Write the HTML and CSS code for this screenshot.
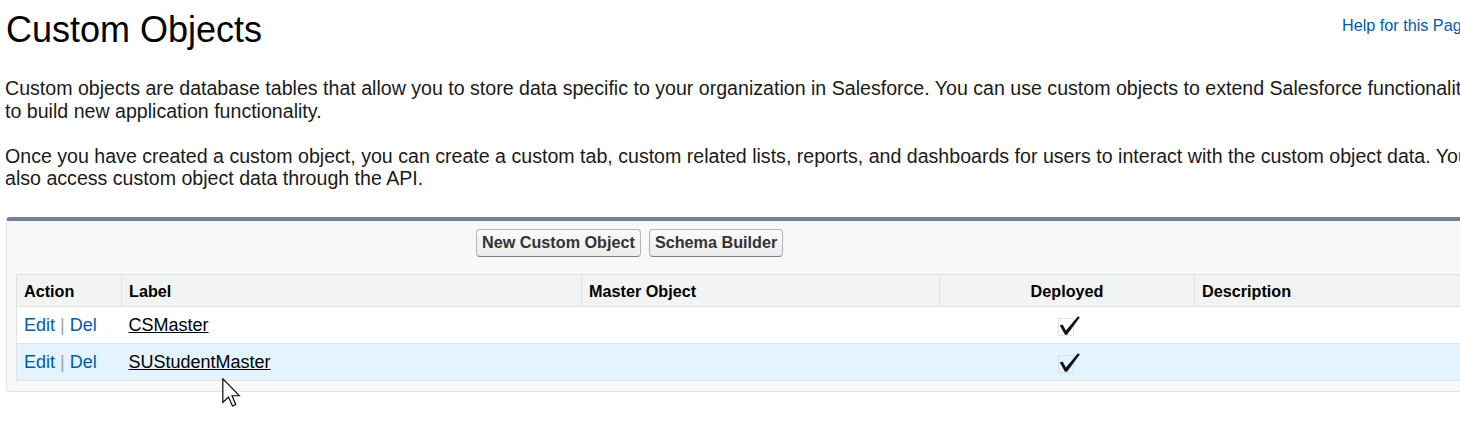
FILE: index.html
```html
<!DOCTYPE html>
<html>
<head>
<meta charset="utf-8">
<title>Custom Objects</title>
<link rel="stylesheet" href="styles.css">
</head>
<body>
<div class="page">
  <div class="page-header">
    <h1 class="page-title">Custom Objects</h1>
    <a class="help-link" href="#">Help for this Page</a>
  </div>
  <p class="intro">Custom objects are database tables that allow you to store data specific to your organization in Salesforce. You can use custom objects to extend Salesforce functionality or<br>to build new application functionality.<br><br>Once you have created a custom object, you can create a custom tab, custom related lists, reports, and dashboards for users to interact with the custom object data. You can<br>also access custom object data through the API.</p>

  <div class="block">
    <div class="block-buttons">
      <button class="btn">New Custom Object</button>
      <button class="btn">Schema Builder</button>
    </div>
    <table class="list">
      <colgroup>
        <col class="c-action"><col class="c-label"><col class="c-master"><col class="c-deployed"><col class="c-desc">
      </colgroup>
      <thead>
        <tr>
          <th>Action</th>
          <th>Label</th>
          <th>Master Object</th>
          <th class="center">Deployed</th>
          <th>Description</th>
        </tr>
      </thead>
      <tbody>
        <tr>
          <td><a class="action" href="#">Edit</a> <span class="sep">|</span> <a class="action" href="#">Del</a></td>
          <td><a class="obj" href="#">CSMaster</a></td>
          <td></td>
          <td class="center"><svg class="check" width="32" height="24" viewBox="0 0 32 24"><rect x="8.5" y="5.5" width="15" height="17" fill="none" stroke="#c8c8c8" stroke-dasharray="1 1"/><path d="M9.8 12.6 L12.6 11.4 L15.9 17.6 L28 3.2 L29.8 4.4 L17 21.8 L15 21.8 Z" fill="#111"/></svg></td>
          <td></td>
        </tr>
        <tr class="hover">
          <td><a class="action" href="#">Edit</a> <span class="sep">|</span> <a class="action" href="#">Del</a></td>
          <td><a class="obj" href="#">SUStudentMaster</a></td>
          <td></td>
          <td class="center"><svg class="check" width="32" height="24" viewBox="0 0 32 24"><rect x="8.5" y="5.5" width="15" height="17" fill="none" stroke="#c8c8c8" stroke-dasharray="1 1"/><path d="M9.8 12.6 L12.6 11.4 L15.9 17.6 L28 3.2 L29.8 4.4 L17 21.8 L15 21.8 Z" fill="#111"/></svg></td>
          <td></td>
        </tr>
      </tbody>
    </table>
  </div>
</div>
<svg class="cursor" width="20" height="29" viewBox="0 0 13 19"><path d="M0.5 0.5 L0.5 16 L4.2 12.5 L6.8 18.3 L9 17.3 L6.5 11.6 L11.3 11.6 Z" fill="#fff" stroke="#000" stroke-width="0.75" stroke-linejoin="miter"/></svg>
</body>
</html>
```
FILE: styles.css
```css
html, body {
  margin: 0;
  padding: 0;
  background: #fff;
}
body {
  width: 1460px;
  height: 436px;
  overflow: hidden;
  position: relative;
  font-family: "Liberation Sans", Arial, sans-serif;
  color: #1a1a1a;
}
.page {
  width: 1620px;
  padding: 0 0 0 5px;
}
.page-header {
  display: flex;
  align-items: flex-start;
  padding-top: 10px;
}
.page-title {
  margin: 0 0 0 1px;
  font-size: 36px;
  line-height: 40px;
  font-weight: normal;
  color: #000;
  width: 1336px;
}
.help-link {
  font-size: 16.2px;
  line-height: 19px;
  margin-top: 6px;
  color: #015ba7;
  text-decoration: none;
  white-space: nowrap;
}
.intro {
  margin: 27px 0 0 0;
  font-size: 19.6px;
  line-height: 22.6px;
  white-space: nowrap;
}
.block {
  margin-top: 27px;
  margin-left: 1px;
  background: #f8f8f8;
  border: 1px solid #e0e3e5;
  border-top: 4.5px solid #747e96;
  border-radius: 4px;
  padding: 8px 9px 10px 9px;
}
.block-buttons {
  display: flex;
  gap: 8px;
  padding-left: 460px;
  margin-bottom: 17px;
}
.btn {
  font-family: "Liberation Sans", Arial, sans-serif;
  font-size: 16.2px;
  font-weight: bold;
  color: #333;
  background: linear-gradient(#fbfbfb, #ececec);
  border: 1px solid #b5b5b5;
  border-bottom-color: #7f7f7f;
  border-radius: 4px;
  padding: 3px 5px 4px;
  line-height: 19px;
  height: 28px;
}
.list {
  border-collapse: collapse;
  table-layout: fixed;
  width: 1580px;
  background: #fff;
  border: 1px solid #e0e3e5;
  font-size: 18px;
}
.c-action { width: 105px; }
.c-label { width: 460px; }
.c-master { width: 358px; }
.c-deployed { width: 255px; }
.list th {
  background: #f2f3f3;
  font-size: 16.2px;
  font-weight: bold;
  color: #000;
  text-align: left;
  height: 32px;
  padding: 2px 7px 0;
  border-left: 1px solid #e0e3e5;
  border-bottom: 1px solid #e0e3e5;
  box-sizing: border-box;
}
.list th:first-child { border-left: none; }
.list td {
  height: 34px;
  padding: 2px 7px 0;
  border-bottom: 1px solid #e3e3e3;
  vertical-align: middle;
}
.list .center { text-align: center; }
.list tr.hover td { background: #e3f3ff; }
.action {
  color: #015ba7;
  text-decoration: none;
}
.sep { color: #9aa4b0; }
.obj {
  color: #000;
  text-decoration: underline;
}
.check {
  display: block;
  margin: -2px auto 0;
  position: relative;
  left: -1px;
}
.cursor {
  position: absolute;
  left: 222px;
  top: 378px;
}
```
